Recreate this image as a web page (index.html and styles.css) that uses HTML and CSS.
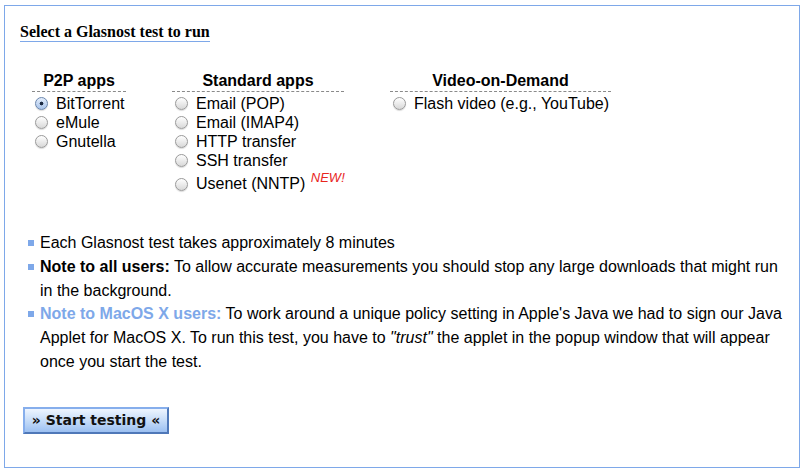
FILE: index.html
```html
<!DOCTYPE html>
<html>
<head>
<meta charset="utf-8">
<link rel="stylesheet" href="styles.css">
</head>
<body>
<div class="box">
  <h2 class="title">Select a Glasnost test to run</h2>
  <div class="apps">
    <div class="col col-p2p">
      <div class="head">P2P apps</div>
      <label class="opt"><input type="radio" name="t" checked><span>BitTorrent</span></label>
      <label class="opt"><input type="radio" name="t"><span>eMule</span></label>
      <label class="opt"><input type="radio" name="t"><span>Gnutella</span></label>
    </div>
    <div class="col col-std">
      <div class="head">Standard apps</div>
      <label class="opt"><input type="radio" name="t"><span>Email (POP)</span></label>
      <label class="opt"><input type="radio" name="t"><span>Email (IMAP4)</span></label>
      <label class="opt"><input type="radio" name="t"><span>HTTP transfer</span></label>
      <label class="opt"><input type="radio" name="t"><span>SSH transfer</span></label>
      <label class="opt opt-new"><input type="radio" name="t"><span>Usenet (NNTP) <sup class="new">NEW!</sup></span></label>
    </div>
    <div class="col col-vod">
      <div class="head">Video-on-Demand</div>
      <label class="opt"><input type="radio" name="t"><span>Flash video (e.g., YouTube)</span></label>
    </div>
  </div>
  <ul class="notes">
    <li>Each Glasnost test takes approximately 8 minutes</li>
    <li><b>Note to all users:</b> To allow accurate measurements you should stop any large downloads that might run in the background.</li>
    <li><b class="mac">Note to MacOS X users:</b> To work around a unique policy setting in Apple's Java we had to sign our Java Applet for MacOS X. To run this test, you have to <i>"trust"</i> the applet in the popup window that will appear once you start the test.</li>
  </ul>
  <button class="start" type="button">» Start testing «</button>
</div>
</body>
</html>
```
FILE: styles.css
```css
html, body {
  margin: 0;
  padding: 0;
  background: #fff;
}
body {
  font-family: "Liberation Sans", Arial, sans-serif;
  font-size: 16px;
  color: #000;
}
.box {
  margin: 5px 5px 0 4px;
  height: 461px;
  border: 1px solid #7ea8e9;
  padding: 0 14px 0 15px;
  box-sizing: content-box;
}
.title {
  display: inline-block;
  margin: 17px 0 0 0;
  font-family: "Liberation Serif", "Times New Roman", serif;
  font-weight: bold;
  font-size: 16px;
  line-height: 17px;
  padding-bottom: 1px;
  border-bottom: 1px solid #7ea8e9;
}
.apps {
  display: grid;
  grid-template-columns: 94px 172px 221px;
  column-gap: 46px;
  margin: 30px 0 0 12px;
}
.col {
  display: flex;
  flex-direction: column;
}
.head {
  font-weight: bold;
  text-align: center;
  line-height: 18px;
  padding-bottom: 1px;
  border-bottom: 1px dashed #8a8a8a;
  margin-bottom: 2px;
}
.opt {
  display: flex;
  align-items: center;
  height: 19px;
  line-height: 19px;
  white-space: nowrap;
}
.opt-new {
  height: 23px;
  align-items: flex-end;
}
.opt input {
  appearance: none;
  -webkit-appearance: none;
  width: 13px;
  height: 13px;
  margin: 0 8px 0 3px;
  border-radius: 50%;
  border: 1px solid #9a9a9a;
  background: linear-gradient(#ffffff, #d8d8d8);
  box-sizing: border-box;
  box-shadow: 0 1px 1px rgba(0,0,0,0.15);
  flex: none;
}
.opt-new input {
  margin-bottom: 2px;
}
.opt input:checked {
  border-color: #6a86ad;
  background: radial-gradient(circle, #1c2b44 0, #1c2b44 1.6px, transparent 2.2px), linear-gradient(#e4eefc, #a9c4ea);
}
.new {
  color: #e8261e;
  font-style: italic;
  font-size: 13px;
  line-height: 0;
  vertical-align: 7px;
  margin-left: 1px;
}
.notes {
  list-style: none;
  margin: 38px 0 0 0;
  padding: 0 0 0 20px;
  line-height: 23.8px;
}
.notes li {
  position: relative;
}
.notes li::before {
  content: "";
  position: absolute;
  left: -12px;
  top: 9px;
  width: 6px;
  height: 6px;
  background: #7ea8e9;
}
.mac {
  color: #7ea8e9;
}
.start {
  display: block;
  margin: 33px 0 0 3px;
  width: 146px;
  height: 27px;
  padding: 0;
  font-family: "DejaVu Sans", Verdana, sans-serif;
  font-weight: bold;
  font-size: 14px;
  color: #111;
  border: 2px solid;
  border-color: #86aeec #4f78b8 #4f78b8 #86aeec;
  background: linear-gradient(#eef5ff, #c6dcf8 50%, #9cc0f1);
  cursor: pointer;
}
```
